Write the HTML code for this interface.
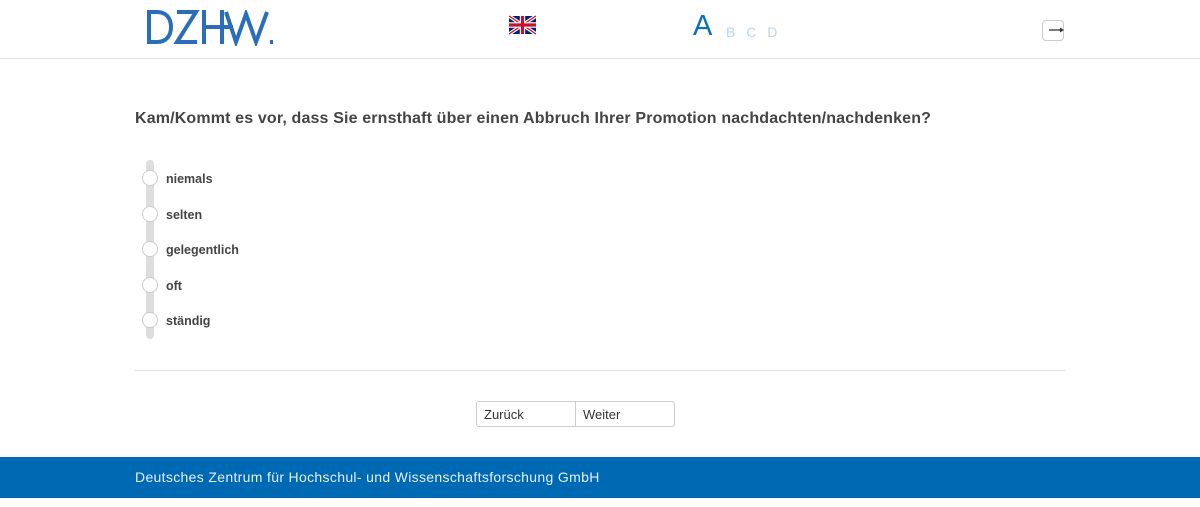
<!DOCTYPE html>
<html><head><meta charset="utf-8"><style>
*{margin:0;padding:0;box-sizing:border-box}
body{width:1200px;height:507px;background:#fff;font-family:"Liberation Sans",sans-serif;position:relative;overflow:hidden;color:#444}
.abs{position:absolute}
.hdr{left:0;top:0;width:1200px;height:59px;border-bottom:1px solid #ddd}
.q{left:135px;top:110px;font-size:16px;font-weight:bold;color:#444;letter-spacing:0.15px}
.track{left:146px;top:160px;width:8px;height:179px;background:#ddd;border-radius:4px}
.rad{left:142px;width:16px;height:16px;border-radius:50%;background:#fff;border:1px solid #ccc}
.lab{left:166px;font-size:12.5px;font-weight:bold;color:#444}
.hr{left:135px;top:370px;width:930px;height:1px;background:#ddd}
.btn{top:401px;height:26px;border:1px solid #ccc;font-size:13px;padding:5px 7px;color:#333}
.foot{left:0;top:457px;width:1200px;height:41px;background:#0069b4;color:#e6eef7;font-size:14px;padding:12px 135px;letter-spacing:0.33px}
</style></head><body>
<div class="abs hdr"></div>
<svg class="abs" style="left:147px;top:10px" width="130" height="36" viewBox="0 0 130 36" fill="none" stroke="#2a6ebb" stroke-width="4">
<path d="M2,2 V32 H10 C19,32 24,26 24,17 C24,8 19,2 10,2 H2Z"/>
<path d="M30,2 H49 L30,32 H50"/>
<path d="M57,0 V34 M75,0 V34 M57,17 H86"/>
<path d="M79,2 L89,32 L99,4 L109,32 L120,2"/>
<rect x="123" y="30" width="3" height="4" fill="#2a6ebb" stroke="none"/>
</svg>
<svg class="abs" style="left:509px;top:15px" width="27" height="20" viewBox="0 0 60 40">
<rect width="60" height="40" fill="#012169"/>
<path d="M0,0 L60,40 M60,0 L0,40" stroke="#fff" stroke-width="8"/>
<path d="M0,0 L60,40 M60,0 L0,40" stroke="#C8102E" stroke-width="3"/>
<path d="M30,0 V40 M0,20 H60" stroke="#fff" stroke-width="12"/>
<path d="M30,0 V40 M0,20 H60" stroke="#C8102E" stroke-width="7"/>
</svg>
<div class="abs" style="left:693px;top:10px;font-size:29px;color:#0a6fbf">A</div>
<div class="abs" style="left:726px;top:24px;font-size:14px;color:#b9d6ee;word-spacing:7px">B C D</div>
<div class="abs" style="left:1042px;top:20px;width:22px;height:21px;border:1px solid #ccc;border-radius:4px"></div>
<svg class="abs" style="left:1049px;top:26px" width="16" height="8"><path d="M0,4 H12" stroke="#333" stroke-width="1.3"/><path d="M11,1.5 L15,4 L11,6.5Z" fill="#333"/></svg>
<div class="abs q">Kam/Kommt es vor, dass Sie ernsthaft über einen Abbruch Ihrer Promotion nachdachten/nachdenken?</div>
<div class="abs track"></div>
<div class="abs rad" style="top:170px"></div><div class="abs lab" style="top:172px">niemals</div>
<div class="abs rad" style="top:206px"></div><div class="abs lab" style="top:208px">selten</div>
<div class="abs rad" style="top:241px"></div><div class="abs lab" style="top:243px">gelegentlich</div>
<div class="abs rad" style="top:277px"></div><div class="abs lab" style="top:279px">oft</div>
<div class="abs rad" style="top:312px"></div><div class="abs lab" style="top:314px">ständig</div>
<div class="abs hr"></div>
<div class="abs btn" style="left:476px;width:100px;border-radius:3px 0 0 3px">Zurück</div>
<div class="abs btn" style="left:575px;width:100px;border-radius:0 3px 3px 0">Weiter</div>
<div class="abs foot">Deutsches Zentrum für Hochschul- und Wissenschaftsforschung GmbH</div>
</body></html>
